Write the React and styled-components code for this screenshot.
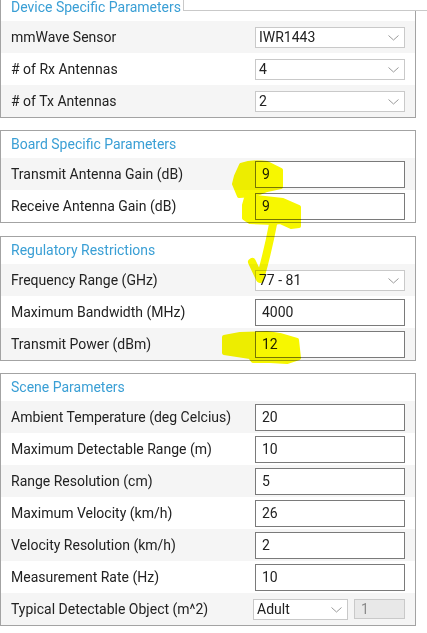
import React from 'react';
import styled, { createGlobalStyle } from 'styled-components';

const GlobalStyle = createGlobalStyle`
  html, body {
    margin: 0;
    padding: 0;
    background: white;
    overflow: hidden;
  }

  body {
    font-family: Roboto, "Liberation Sans", sans-serif;
    font-size: 14px;
    color: #222;
  }
`

const Page = styled.div`
  position: relative;
  width: 427px;
  height: 633px;
  overflow: hidden;
`

const Panel = styled.section`
  width: 416px;
  box-sizing: border-box;
  border: 1px solid #a3a3a3;
  margin-bottom: 12px;

  &:first-child {
    margin-top: -7px;
  }

  &:nth-child(2) {
    margin-bottom: 13px;
  }
`

const Title = styled.div`
  box-sizing: border-box;
  height: 27px;
  padding: 5px 0 0 10px;
  line-height: 16px;
  color: #3a9fd5;
`

const Row = styled.div`
  display: flex;
  align-items: center;
  height: 32px;
  padding: 0 10px;
  background-color: ${props => (props.$alt ? '#f5f5f5' : 'white')};
`

const Label = styled.div`
  width: 244px;
  flex-shrink: 0;
  white-space: nowrap;
`

const Control = styled.div`
  display: flex;
  align-items: center;
  width: 150px;
  gap: 6px;
`

const SelectBox = styled.div`
  position: relative;
  display: flex;
  align-items: center;
  box-sizing: border-box;
  width: ${props => props.$width || 150}px;
  height: 21px;
  margin-left: ${props => props.$shift || 0}px;
  padding-left: 3px;
  border: 1px solid #c9c9c9;
  background: white;

  svg {
    position: absolute;
    right: 5px;
    top: 7px;
  }
`

const TextInput = styled.input`
  box-sizing: border-box;
  width: 150px;
  height: 27px;
  padding: 0 6px;
  border: 1px solid #7a7a7a;
  border-radius: 0;
  background: white;
  font-family: inherit;
  font-size: 14px;
  color: #222;
  outline: none;
`

const SmallInput = styled.input`
  box-sizing: border-box;
  width: 51px;
  height: 20px;
  padding: 0 6px;
  border: 1px solid #c9c9c9;
  border-radius: 0;
  background: #e8e8e8;
  font-family: inherit;
  font-size: 14px;
  color: #8a8a8a;
  outline: none;
`

const TopTab = styled.div`
  position: absolute;
  top: 0;
  left: 183px;
  right: 0;
  height: 10px;
  background: white;
  border-left: 1px solid #c9c9c9;
  border-bottom: 1px solid #c9c9c9;
`

const Marker = styled.svg`
  position: absolute;
  top: 0;
  left: 0;
  pointer-events: none;
  mix-blend-mode: multiply;
`

function Chevron() {
  return (
    <svg width="11" height="6" viewBox="0 0 11 6">
      <polyline points="0.5,0.5 5.5,5 10.5,0.5" fill="none" stroke="#9a9a9a" strokeWidth="1" />
    </svg>
  );
}

function Select({ value, width, shift }) {
  return (
    <SelectBox $width={width} $shift={shift}>
      {value}
      <Chevron />
    </SelectBox>
  );
}

const panels = [
  {
    title: 'Device Specific Parameters',
    rows: [
      { label: 'mmWave Sensor', select: 'IWR1443' },
      { label: '# of Rx Antennas', select: '4' },
      { label: '# of Tx Antennas', select: '2' },
    ],
  },
  {
    title: 'Board Specific Parameters',
    rows: [
      { label: 'Transmit Antenna Gain (dB)', input: '9' },
      { label: 'Receive Antenna Gain (dB)', input: '9' },
    ],
  },
  {
    title: 'Regulatory Restrictions',
    rows: [
      { label: 'Frequency Range (GHz)', select: '77 - 81' },
      { label: 'Maximum Bandwidth (MHz)', input: '4000' },
      { label: 'Transmit Power (dBm)', input: '12' },
    ],
  },
  {
    title: 'Scene Parameters',
    rows: [
      { label: 'Ambient Temperature (deg Celcius)', input: '20' },
      { label: 'Maximum Detectable Range (m)', input: '10' },
      { label: 'Range Resolution (cm)', input: '5' },
      { label: 'Maximum Velocity (km/h)', input: '26' },
      { label: 'Velocity Resolution (km/h)', input: '2' },
      { label: 'Measurement Rate (Hz)', input: '10' },
      { label: 'Typical Detectable Object (m^2)', object: 'Adult', size: '1' },
    ],
  },
];

function renderControl(row) {
  if (row.select) return <Select value={row.select} />;
  if (row.object) {
    return (
      <>
        <Select value={row.object} width={95} shift={-2} />
        <SmallInput defaultValue={row.size} disabled />
      </>
    );
  }
  return <TextInput defaultValue={row.input} />;
}

export default function App() {
  return (
    <Page>
      <GlobalStyle />
      {panels.map(panel => (
        <Panel key={panel.title}>
          <Title>{panel.title}</Title>
          {panel.rows.map((row, i) => (
            <Row key={row.label} $alt={i % 2 === 0}>
              <Label>{row.label}</Label>
              <Control>{renderControl(row)}</Control>
            </Row>
          ))}
        </Panel>
      ))}
      <TopTab />

      {/* highlighter scribbles over the screenshot */}
      <Marker width="427" height="633" viewBox="0 0 427 633">
        <g fill="#f7f700" stroke="#f7f700" strokeWidth="4" strokeLinejoin="round">
          <path d="M241 165 Q252 161 267 163 L281 170 L281 187 L267 190 L255 195 L239 196 L234 184 L236 176 Z" />
          <path d="M244 205 L246 198 L256 197 L283 200 L299 207 L299 226 L291 227 L280 222 L274 223 L250 222 L244 218 Z" />
          <path d="M224 337 L240 334 L267 333 L280 335 L297 340 L299 358 L287 362 L270 361 L253 361 L250 357 L224 353 Z" />
        </g>
        <path
          d="M273 224 C270 240 266 258 260 279 L252 262"
          fill="none"
          stroke="#f7f700"
          strokeWidth="8"
          strokeLinecap="round"
          strokeLinejoin="round"
        />
      </Marker>
    </Page>
  );
}
